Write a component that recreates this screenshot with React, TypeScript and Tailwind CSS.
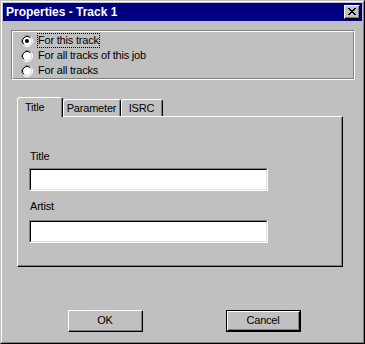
import React from 'react';

const options = ['For this track', 'For all tracks of this job', 'For all tracks'];
const tabs = [
  { label: 'Title', width: 'w-[46px]' },
  { label: 'Parameter', width: 'w-[58px]' },
  { label: 'ISRC', width: 'w-[42px]' },
];

const Radio: React.FC<{ checked?: boolean }> = ({ checked }) => (
  <svg width="12" height="12" viewBox="0 0 12 12" className="shrink-0">
    <circle cx="6" cy="6" r="5.5" fill="none" stroke="#ffffff" />
    <path d="M2.11 9.89 A5.5 5.5 0 0 1 9.89 2.11" fill="none" stroke="#808080" />
    <circle cx="6" cy="6" r="4.5" fill="#ffffff" stroke="#dfdfdf" />
    <path d="M2.82 9.18 A4.5 4.5 0 0 1 9.18 2.82" fill="none" stroke="#000000" />
    {checked && <circle cx="6" cy="6" r="2" fill="#000000" />}
  </svg>
);

const CloseButton: React.FC = () => (
  <div className="h-[14px] w-[16px] border border-t-white border-l-white border-r-black border-b-black bg-[#c0c0c0]">
    <div className="flex h-full w-full items-center justify-center border-r border-b border-r-[#808080] border-b-[#808080]">
      <svg width="8" height="7" viewBox="0 0 8 7" shapeRendering="crispEdges">
        <path
          d="M0 0h2v1H0zM6 0h2v1H6zM1 1h2v1H1zM5 1h2v1H5zM2 2h4v1H2zM3 3h2v1H3zM2 4h4v1H2zM1 5h2v1H1zM5 5h2v1H5zM0 6h2v1H0zM6 6h2v1H6z"
          fill="#000000"
        />
      </svg>
    </div>
  </div>
);

const TextBox: React.FC = () => (
  <div className="h-[23px] w-[239px] border border-t-[#808080] border-l-[#808080] border-r-white border-b-white">
    <div className="h-full w-full border border-t-black border-l-black border-r-[#dfdfdf] border-b-[#dfdfdf] bg-white" />
  </div>
);

const Button: React.FC<{ label: string; isDefault?: boolean }> = ({ label, isDefault }) => {
  const face = (
    <div className="h-full w-full border border-t-white border-l-white border-r-black border-b-black">
      <div className="flex h-full w-full items-center justify-center border-r border-b border-r-[#808080] border-b-[#808080]">
        {label}
      </div>
    </div>
  );
  if (isDefault) {
    return <div className="h-[22px] w-[75px] border border-black">{face}</div>;
  }
  return <div className="h-[22px] w-[75px]">{face}</div>;
};

export default function App() {
  return (
    <div className="h-[344px] w-[365px] bg-[#c0c0c0] font-['Liberation_Sans',Arial,sans-serif] text-[11px] leading-[13px] tracking-[-0.2px] text-black">
      <div className="h-full w-full border border-t-[#c0c0c0] border-l-[#c0c0c0] border-r-black border-b-black">
        <div className="h-full w-full border border-t-white border-l-white border-r-[#808080] border-b-[#808080] p-px">
          {/* Title bar */}
          <div className="flex h-[18px] items-center justify-between bg-[#000080] pr-[2px] pl-[3px]">
            <span className="text-[12px] font-bold tracking-normal text-white">Properties - Track 1</span>
            <CloseButton />
          </div>

          {/* Scope group */}
          <div className="mt-[9px] ml-[8px] h-[50px] w-[344px] border border-t-[#808080] border-l-[#808080] border-r-white border-b-white">
            <div className="h-full w-full border border-t-white border-l-white border-r-[#808080] border-b-[#808080] pt-px pl-[8px]">
              {options.map((option, i) => (
                <div key={option} className="flex h-[15px] items-center">
                  <Radio checked={i === 0} />
                  <span
                    className={`ml-[5px] ${
                      i === 0 ? 'outline-1 outline-offset-0 outline-black outline-dotted' : ''
                    }`}
                  >
                    {option}
                  </span>
                </div>
              ))}
            </div>
          </div>

          {/* Tabs */}
          <div className="mt-[17px] ml-[14px] w-[326px]">
            <div className="relative z-10 flex h-[19px] items-end">
              {tabs.map((tab, i) =>
                i === 0 ? (
                  <div
                    key={tab.label}
                    className={`${tab.width} -mb-px h-[20px] rounded-t-[3px] border-t border-l border-r border-t-white border-l-white border-r-black bg-[#c0c0c0]`}
                  >
                    <div className="flex h-full items-start border-r border-r-[#808080] pt-[3px] pl-[7px]">
                      {tab.label}
                    </div>
                  </div>
                ) : (
                  <div
                    key={tab.label}
                    className={`${tab.width} h-[17px] rounded-t-[3px] border-t border-l border-r border-t-white border-l-white border-r-black bg-[#c0c0c0]`}
                  >
                    <div className="flex h-full items-start justify-center border-r border-r-[#808080] pt-[2px]">
                      {tab.label}
                    </div>
                  </div>
                ),
              )}
            </div>
            <div className="h-[151px] border border-t-white border-l-white border-r-black border-b-black">
              <div className="flex h-full w-full flex-col items-start border-r border-b border-r-[#808080] border-b-[#808080] pl-[11px]">
                <div className="mt-[33px] ml-px">Title</div>
                <div className="mt-[5px]">
                  <TextBox />
                </div>
                <div className="mt-[9px] ml-px">Artist</div>
                <div className="mt-[7px]">
                  <TextBox />
                </div>
              </div>
            </div>
          </div>

          {/* Buttons */}
          <div className="mt-[43px] ml-[65px] flex">
            <Button label="OK" />
            <div className="ml-[83px]">
              <Button label="Cancel" isDefault />
            </div>
          </div>
        </div>
      </div>
    </div>
  );
}
